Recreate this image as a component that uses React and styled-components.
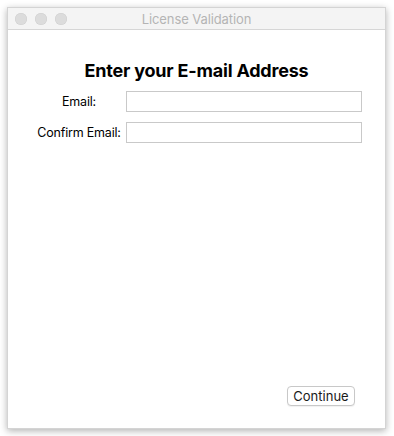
import React from 'react';
import styled, { createGlobalStyle } from 'styled-components';

const GlobalStyle = createGlobalStyle`
  body {
    margin: 0;
    background: #ffffff;
    font-family: Inter, "Liberation Sans", sans-serif;
  }
`;

const Page = styled.div`
  padding: 7px;
`;

const Window = styled.div`
  width: 379px;
  height: 422px;
  box-sizing: border-box;
  display: flex;
  flex-direction: column;
  background: #ffffff;
  border: 1px solid #d4d4d4;
  box-shadow: 0 2px 7px rgba(0, 0, 0, 0.3);
`;

const TitleBar = styled.div`
  height: 21px;
  display: grid;
  grid-template-columns: 1fr auto 1fr;
  align-items: center;
  background: #f4f4f4;
  border-bottom: 1px solid #d6d6d6;
`;

const Lights = styled.div`
  display: flex;
  gap: 8px;
  padding-left: 7px;
`;

const Light = styled.span`
  width: 12px;
  height: 12px;
  border-radius: 50%;
  background: #dcdcdc;
  box-shadow: inset 0 0 0 0.5px #cfcfcf;
`;

const Title = styled.div`
  font-size: 13px;
  letter-spacing: -0.1px;
  color: #b4b4b4;
`;

const Content = styled.div`
  flex: 1;
  display: flex;
  flex-direction: column;
  padding: 30px 30px 22px 30px;
`;

const Heading = styled.h1`
  margin: 0 0 9px 0;
  text-align: center;
  font-size: 18px;
  line-height: 22px;
  font-weight: 700;
  letter-spacing: -0.2px;
  color: #000000;
`;

const Form = styled.div`
  display: grid;
  grid-template-columns: 82px 236px;
  column-gap: 6px;
  row-gap: 10px;
`;

const Label = styled.label`
  display: flex;
  justify-content: center;
  white-space: nowrap;
  font-size: 12.5px;
  line-height: 21px;
  letter-spacing: -0.2px;
  color: #000000;
`;

const Field = styled.input`
  height: 21px;
  box-sizing: border-box;
  border: 1px solid #c9c9c9;
  background: #ffffff;
  outline: none;
  padding: 0 4px;
  font-size: 13px;
`;

const Footer = styled.div`
  margin-top: auto;
  display: flex;
  justify-content: flex-end;
`;

const Button = styled.button`
  height: 20px;
  width: 68px;
  padding: 0;
  box-sizing: border-box;
  border: 1px solid #c8c8c8;
  border-radius: 4px;
  background: #ffffff;
  font-family: inherit;
  font-size: 13px;
  color: #1a1a1a;
  box-shadow: 0 1px 1px rgba(0, 0, 0, 0.06);
`;

const App = () => {
  return (
    <Page>
      <GlobalStyle />
      <Window>
        <TitleBar>
          <Lights>
            <Light />
            <Light />
            <Light />
          </Lights>
          <Title>License Validation</Title>
        </TitleBar>
        <Content>
          <Heading>Enter your E-mail Address</Heading>
          <Form>
            <Label>Email:</Label>
            <Field type="text" />
            <Label>Confirm Email:</Label>
            <Field type="text" />
          </Form>
          <Footer>
            <Button>Continue</Button>
          </Footer>
        </Content>
      </Window>
    </Page>
  );
};

export default App;
